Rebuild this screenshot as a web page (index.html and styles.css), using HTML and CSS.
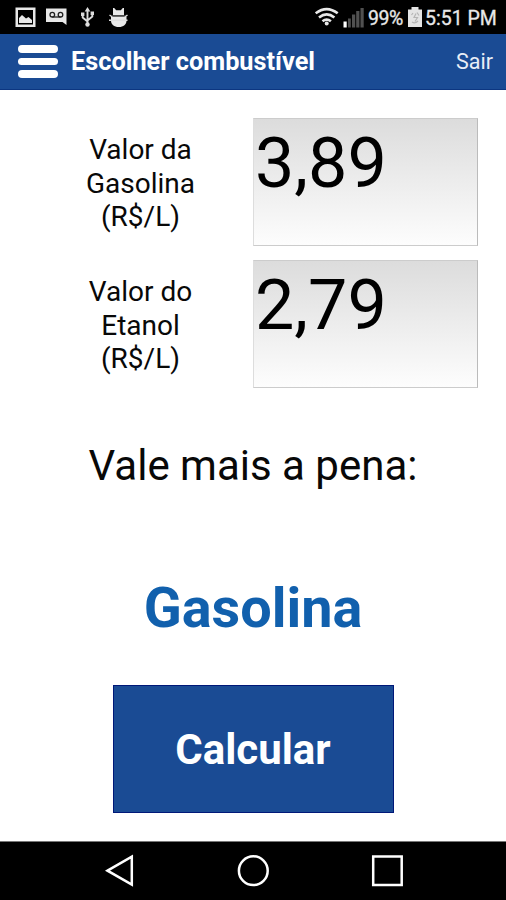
FILE: index.html
```html
<!DOCTYPE html>
<html lang="pt-BR">
<head>
<meta charset="utf-8">
<title>Escolher combustível</title>
<link rel="stylesheet" href="styles.css">
</head>
<body>
<div class="statusbar">
  <svg class="notifications" width="132" height="34" viewBox="0 0 132 34">
    <path fill="#e8e8e8" fill-rule="evenodd" d="M15.500 7.500h20v19.500h-20zM18 10v14.500h15V10z"/>
    <path fill="#e8e8e8" d="M19 23v-5l3-3 4 3.500 2.500-1.500 3.500 3v3z"/>
    <path fill="#e8e8e8" d="M46 8.500h20.500V25l-4-3H46z"/>
    <g fill="none" stroke="#222" stroke-width="1.300"><circle cx="52.300" cy="14.700" r="2.300"/><circle cx="60.500" cy="14.700" r="2.300"/><path d="M52.300 17h8.200"/></g>
    <g fill="none" stroke="#ddd" stroke-width="1.900"><path d="M87.500 9v15M82.700 14v3.500l4.800 4M92.300 13v3.500l-4.800 4"/></g>
    <path fill="#ddd" d="M87.500 7l2.800 4.500h-5.600zM81 12.500h3.400v3.400H81zM90.600 11.500H94v3.400h-3.400z"/><circle cx="87.500" cy="24.500" r="2.200" fill="#ddd"/>
    <path fill="#e8e8e8" d="M113 15.300V8h1.200l2 2.200h4.600l2-2.200h1.200v7.300zM111 16.500h15.500v4c0 4-3 6.500-7.700 6.500s-7.800-2.500-7.800-6.500z"/>
    <path d="M109.500 15l3 2M127.500 15l-3 2M109 20.200h18.500" stroke="#ddd" stroke-width="1.500"/>
    <path d="M112 15.900h13" stroke="#555" stroke-width="1"/>
  </svg>
  <div class="system">
    <svg width="50" height="34" viewBox="315 0 50 34">
      <g fill="none" stroke="#e8e8e8" stroke-width="2.600"><path d="M315.700 13.300q11-8.500 22 0M319 17.500q7.700-6.200 15.400 0M322.500 21.300q4.200-3.500 8.400 0"/></g><circle cx="326.700" cy="23.500" r="2" fill="#e8e8e8"/>
      <path fill="#fff" d="M343.500 21.500h3.200v6h-3.200z"/><path fill="#505050" d="M348 18.500h2.800v9H348zM352 14.500h3.200v13H352zM356.200 11h3.200v16.500h-3.200zM360.500 8h3.200v19.500h-3.200z"/>
    </svg>
    <span class="percent">99%</span>
    <svg class="battery" width="14" height="34" viewBox="0 0 14 34"><path fill="#e4e4e4" d="M3.500 7h7v2.500H14v17.500H0V9.500h3.500z"/><path d="M3.500 15l1.500-2M9 12.500l2 3M4 22q3 2 6-1M8 13.500l-2 4h3.500l-2.500 4" fill="none" stroke="#b5b5b5" stroke-width="1.200"/></svg>
    <span class="clock">5:51 PM</span>
  </div>
</div>
<header class="appbar">
  <div class="menu"><i></i><i></i><i></i></div>
  <h1>Escolher combustível</h1>
  <span class="exit">Sair</span>
</header>
<main>
  <div class="row"><label>Valor da<br>Gasolina<br>(R$/L)</label><div class="field">3,89</div></div>
  <div class="row"><label>Valor do<br>Etanol<br>(R$/L)</label><div class="field">2,79</div></div>
  <p class="caption">Vale mais a pena:</p>
  <p class="result">Gasolina</p>
  <button class="calculate">Calcular</button>
</main>
<nav class="navbar">
  <svg width="506" height="58" viewBox="0 842 506 58" fill="none" stroke="#fff" stroke-width="2.500">
    <path d="M107.500 870.700l24.300-14v28z"/><circle cx="253.300" cy="870.700" r="14.400"/><path d="M373.200 856.500h28.500v28.500h-28.500z"/>
  </svg>
</nav>
</body>
</html>
```
FILE: styles.css
```css
* { box-sizing: border-box; }
body { margin: 0; width: 506px; height: 900px; display: flex; flex-direction: column; overflow: hidden; background: #fff; color: #080808; font-family: Roboto, sans-serif; }
svg { display: block; flex: none; }
.statusbar { height: 34px; background: #000; color: #e8e8e8; display: flex; justify-content: space-between; flex: none; }
.system { display: flex; width: 191px; line-height: 37px; font-size: 19.500px; white-space: nowrap; -webkit-text-stroke: .3px #e8e8e8; }
.percent { width: 40px; padding-left: 3px; letter-spacing: -.4px; }
.battery { margin-left: 3px; }
.clock { padding-left: 3px; }
.appbar { height: 56px; flex: none; background: #1a4b94; border-bottom: 1px solid #0c3681; color: #fff; display: flex; align-items: center; padding: 0 13px 0 18px; }
.menu { width: 40px; display: flex; flex-direction: column; gap: 5px; }
.menu i { height: 7.400px; border-radius: 4px; background: #fff; }
h1 { margin: 0 0 0 13px; font-size: 25.300px; line-height: 56px; font-weight: 700; white-space: nowrap; }
.exit { margin-left: auto; font-size: 21.500px; line-height: 57px; color: #e8eef7; }
main { flex: 1; display: flex; flex-direction: column; align-items: center; padding-top: 28px; }
.row { width: 506px; display: flex; padding: 0 28px; height: 128px; margin-bottom: 14px; }
label { width: 225px; text-align: center; font-size: 28px; line-height: 33.500px; padding-top: 15px; }
.field { width: 225px; height: 128px; border: 1px solid #ccc; border-left-color: #ddd; border-right-color: #bbb; background: linear-gradient(#dcdcdc, #fdfdfd); font-size: 70px; line-height: 88px; padding-left: 1px; color: #000; }
p { margin: 0; }
.caption { font-size: 42px; line-height: 50px; margin-top: 39px; }
.result { color: #1160ad; font-size: 55.800px; line-height: 64px; font-weight: 700; margin-top: 85px; }
.calculate { width: 281px; height: 128px; margin: 45px 0 0 1px; background: #1a4b94; border: 1px solid #001878; color: #fff; font: 700 42px Roboto, sans-serif; padding: 0 1px 0 0; }
.navbar { height: 59px; flex: none; background: #000; border-top: 1px solid #777; }
```
